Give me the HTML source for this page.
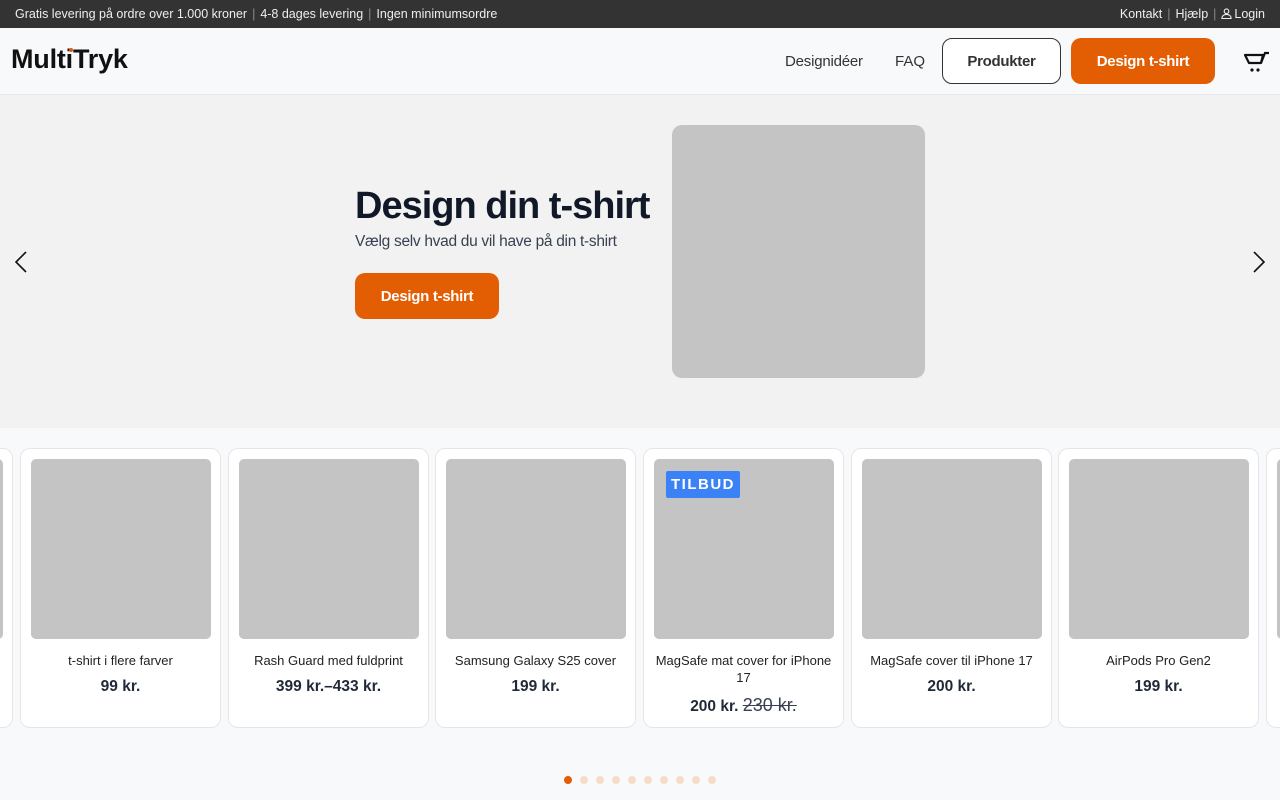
<!DOCTYPE html>
<html><head><meta charset="utf-8"><style>
*{margin:0;padding:0;box-sizing:border-box}
body{width:1280px;height:800px;overflow:hidden;background:#f8f9fb;font-family:"Liberation Sans",sans-serif;position:relative;color:#1f2937}
.a{position:absolute}
.top{left:0;top:0;width:1280px;height:28px;background:#333;color:#eee;font-size:12.5px}
.top span.s{color:#888;margin:0 5px}
.hdr{left:0;top:28px;width:1280px;height:67px;background:#f8f9fb;border-bottom:1px solid #e5e7eb}
.hero{left:0;top:95px;width:1280px;height:333px;background:#f2f2f2}
.btn{display:flex;align-items:center;justify-content:center;border-radius:10px;font-weight:bold;font-size:15px;letter-spacing:-.3px}
.card{top:448px;width:201px;height:280px;background:#fff;border:1px solid #e3e5e8;border-radius:10px}
.card .im{position:absolute;left:10px;top:10px;width:180px;height:180px;background:#c4c4c4;border-radius:5px}
.card .n{position:absolute;left:0;top:203px;width:100%;text-align:center;font-size:13px;color:#222;line-height:17px;padding:0 8px}
.card .p{position:absolute;left:0;top:229px;width:100%;text-align:center;font-size:15.5px;font-weight:bold;color:#1f2937}
.dot{top:776px;width:8px;height:8px;border-radius:50%;background:#f8dcc8}
</style></head><body>
<div class="a top"><div class="a" style="left:15px;top:7px">Gratis levering på ordre over 1.000 kroner<span class="s">|</span>4-8 dages levering<span class="s">|</span>Ingen minimumsordre</div>
<div class="a" style="right:15px;top:7px">Kontakt<span class="s">|</span>Hjælp<span class="s">|</span><svg width="11" height="11" viewBox="0 0 12 12" style="vertical-align:-1px;margin-right:2px"><circle cx="6" cy="3.5" r="2.5" fill="none" stroke="#eee" stroke-width="1.2"/><path d="M1 11.5c0-3 2.2-4.5 5-4.5s5 1.5 5 4.5z" fill="none" stroke="#eee" stroke-width="1.2"/></svg>Login</div></div>
<div class="a hdr">
<div class="a" style="left:11px;top:16px;font-size:27px;font-weight:bold;color:#111;letter-spacing:-.2px">MultiTryk</div>
<div class="a" style="left:69px;top:20px;width:4px;height:4px;border-radius:50%;background:#e35d0a"></div>
<div class="a" style="left:785px;top:25px;font-size:15px;color:#333;letter-spacing:-.2px">Designidéer</div>
<div class="a" style="left:895px;top:25px;font-size:15px;color:#333">FAQ</div>
<div class="a btn" style="left:942px;top:10px;width:119px;height:46px;border:1px solid #333;color:#333;background:#fff">Produkter</div>
<div class="a btn" style="left:1071px;top:10px;width:144px;height:46px;background:#e35d02;color:#fff">Design t-shirt</div>
<svg class="a" style="left:1244px;top:22px" width="28" height="24" viewBox="0 0 28 24"><path d="M1 5h18l-2 8H5z" fill="none" stroke="#111" stroke-width="2.2" stroke-linejoin="round"/><path d="M17 13l4-10h4" fill="none" stroke="#111" stroke-width="2.2"/><circle cx="8" cy="20" r="1.6" fill="#111"/><circle cx="14" cy="20" r="1.6" fill="#111"/></svg>
</div>
<div class="a hero">
<svg class="a" style="left:14px;top:156px" width="14" height="22" viewBox="0 0 14 22"><path d="M12 1L2 11l10 10" fill="none" stroke="#111" stroke-width="1.6"/></svg>
<svg class="a" style="left:1252px;top:156px" width="14" height="22" viewBox="0 0 14 22"><path d="M2 1l10 10L2 21" fill="none" stroke="#111" stroke-width="1.6"/></svg>
<div class="a" style="left:355px;top:90px;font-size:38px;font-weight:bold;color:#111827;letter-spacing:-1px">Design din t-shirt</div>
<div class="a" style="left:355px;top:138px;font-size:15.5px;color:#374151;letter-spacing:-.3px">Vælg selv hvad du vil have på din t-shirt</div>
<div class="a btn" style="left:355px;top:178px;width:144px;height:46px;background:#e35d02;color:#fff">Design t-shirt</div>
<div class="a" style="left:672px;top:30px;width:253px;height:253px;background:#c4c4c4;border-radius:10px"></div>
</div>
<div class="a card" style="left:-188px"><div class="im"></div></div>
<div class="a card" style="left:20px"><div class="im"></div><div class="n">t-shirt i flere farver</div><div class="p">99 kr.</div></div>
<div class="a card" style="left:228px"><div class="im"></div><div class="n">Rash Guard med fuldprint</div><div class="p">399 kr.–433 kr.</div></div>
<div class="a card" style="left:435px"><div class="im"></div><div class="n">Samsung Galaxy S25 cover</div><div class="p">199 kr.</div></div>
<div class="a card" style="left:643px"><div class="im"></div><div class="a" style="left:22px;top:22px;width:74px;height:27px;background:#3b82f6;color:#fff;font-weight:bold;font-size:15px;letter-spacing:1.5px;display:flex;align-items:center;justify-content:center;border-radius:2px">TILBUD</div><div class="n">MagSafe mat cover for iPhone 17</div><div class="p" style="top:246px">200 kr. <span style="font-weight:normal;font-size:18px;color:#374151;text-decoration:line-through">230 kr.</span></div></div>
<div class="a card" style="left:851px"><div class="im"></div><div class="n">MagSafe cover til iPhone 17</div><div class="p">200 kr.</div></div>
<div class="a card" style="left:1058px"><div class="im"></div><div class="n">AirPods Pro Gen2</div><div class="p">199 kr.</div></div>
<div class="a card" style="left:1266px"><div class="im"></div></div>
<div class="a dot" style="left:564px;background:#e35d02"></div>
<div class="a dot" style="left:580px"></div><div class="a dot" style="left:596px"></div><div class="a dot" style="left:612px"></div><div class="a dot" style="left:628px"></div><div class="a dot" style="left:644px"></div><div class="a dot" style="left:660px"></div><div class="a dot" style="left:676px"></div><div class="a dot" style="left:692px"></div><div class="a dot" style="left:708px"></div>
</body></html>
